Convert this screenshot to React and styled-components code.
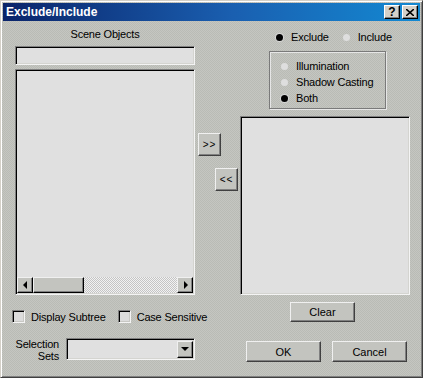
import React from 'react'
import styled, { createGlobalStyle } from 'styled-components'

const GlobalStyle = createGlobalStyle`
  * { box-sizing: border-box; }
  body {
    margin: 0;
    background: #c0c0c0;
    font-family: "Liberation Sans", Arial, sans-serif;
  }
`

const Window = styled.div`
  width: 423px;
  height: 378px;
  display: flex;
  flex-direction: column;
  padding: 1px;
  border: 1px solid;
  border-color: #d4d0c8 #404040 #404040 #d4d0c8;
  box-shadow: inset 1px 1px 0 #fff, inset -1px -1px 0 #808080;
  background-color: #bfc0bb;
  background-image: repeating-conic-gradient(#c5c6c1 0 25%, #b9bbb5 0 50%);
  background-size: 2px 2px;
  overflow: hidden;
`

const TitleBar = styled.div`
  height: 18px;
  margin: 1px 1px 0;
  display: flex;
  align-items: center;
  padding: 0 2px 0 3px;
  background: linear-gradient(to right, #0a246a 0%, #1a5fb0 55%, #1389d2 100%);
`

const Title = styled.div`
  flex: 1;
  color: #fff;
  font-weight: bold;
  font-size: 12px;
  line-height: 18px;
`

const TitleButton = styled.div`
  width: 16px;
  height: 14px;
  margin-left: 2px;
  display: flex;
  align-items: center;
  justify-content: center;
  background: #d4d0c8;
  border: 1px solid;
  border-color: #fff #000 #000 #fff;
  box-shadow: inset -1px -1px 0 #808080;
  font-weight: bold;
  font-size: 12px;
  color: #000;
`

const Body = styled.div`
  flex: 1;
  display: flex;
  align-items: flex-start;
  padding-left: 13px;
  font-size: 11px;
  letter-spacing: -0.2px;
  color: #000;
`

const LeftColumn = styled.div`
  width: 180px;
  flex-shrink: 0;
  display: flex;
  flex-direction: column;
`

const MiddleColumn = styled.div`
  width: 45px;
  flex-shrink: 0;
  display: flex;
  flex-direction: column;
`

const RightColumn = styled.div`
  width: 170px;
  flex-shrink: 0;
  display: flex;
  flex-direction: column;
`

const Label = styled.div`
  margin-top: 6px;
  height: 14px;
  line-height: 14px;
  text-align: center;
`

const Sunken = styled.div`
  margin-top: ${p => p.$top || 0}px;
  height: ${p => p.$height}px;
  background: #e0e0e0;
  border: 1px solid;
  border-color: #808080 #f4f4f4 #f4f4f4 #808080;
  box-shadow: inset 1px 1px 0 #000, inset -1px -1px 0 #d4d4d0;
  display: flex;
  flex-direction: column;
`

const ListArea = styled.div`
  flex: 1;
`

const ScrollBar = styled.div`
  height: 16px;
  margin: 0 1px 1px 1px;
  display: flex;
  background-image: repeating-conic-gradient(#f2f2f2 0 25%, #c4c4c4 0 50%);
  background-size: 2px 2px;
`

const ScrollButton = styled.div`
  width: ${p => p.$width || 16}px;
  height: 16px;
  flex-shrink: 0;
  display: flex;
  align-items: center;
  justify-content: center;
  background: #c3c4bf;
  border: 1px solid;
  border-color: #f0f0f0 #000 #000 #f0f0f0;
  box-shadow: inset -1px -1px 0 #808080;
`

const Track = styled.div`
  flex: 1;
`

const Arrow = ({ dir }) => {
  const points = {
    left: '5,1 5,9 1,5',
    right: '2,1 2,9 6,5',
    down: '0,2 8,2 4,6',
  }[dir]
  const size = dir === 'down' ? [8, 8] : [7, 10]
  return (
    <svg width={size[0]} height={size[1]} viewBox={`0 0 ${size[0]} ${size[1]}`}>
      <polygon points={points} fill="#000" />
    </svg>
  )
}

const CheckRow = styled.div`
  margin-top: 15px;
  margin-left: -3px;
  height: 13px;
  display: flex;
  align-items: center;
  white-space: nowrap;
`

const CheckBox = styled.span`
  flex-shrink: 0;
  width: 13px;
  height: 13px;
  margin-right: 6px;
  margin-left: ${p => p.$gap || 0}px;
  background: #dcdcdc;
  border: 1px solid;
  border-color: #808080 #f4f4f4 #f4f4f4 #808080;
  box-shadow: inset 1px 1px 0 #000, inset -1px -1px 0 #c8c8c4;
`

const SelectionRow = styled.div`
  margin-top: 15px;
  display: flex;
  align-items: center;
  height: 22px;
`

const SelectionLabel = styled.div`
  width: 46px;
  text-align: right;
  line-height: 12px;
  margin-right: 7px;
  margin-top: 1px;
`

const Combo = styled.div`
  width: 129px;
  height: 22px;
  flex-shrink: 0;
  background: #e0e0e0;
  border: 1px solid;
  border-color: #808080 #f4f4f4 #f4f4f4 #808080;
  box-shadow: inset 1px 1px 0 #000, inset -1px -1px 0 #d4d4d0;
  display: flex;
  justify-content: flex-end;
  align-items: center;
  padding-right: 1px;
`

const ComboButton = styled.div`
  width: 16px;
  height: 17px;
  display: flex;
  align-items: center;
  justify-content: center;
  background: #c3c4bf;
  border: 1px solid;
  border-color: #f0f0f0 #000 #000 #f0f0f0;
  box-shadow: inset -1px -1px 0 #808080;
`

const Button = styled.div`
  width: ${p => p.$width}px;
  height: ${p => p.$height}px;
  flex-shrink: 0;
  margin-left: ${p => p.$left || 0}px;
  margin-top: ${p => p.$top || 0}px;
  display: flex;
  align-items: center;
  justify-content: center;
  background: #c3c4bf;
  border: 1px solid;
  border-color: #f0f0f0 #404040 #404040 #f0f0f0;
  box-shadow: inset -1px -1px 0 #808080;
  font-size: ${p => p.$size || 11}px;
  letter-spacing: ${p => (p.$size ? '1px' : 'normal')};
`

const RadioRow = styled.div`
  margin-top: 9px;
  height: 14px;
  display: flex;
  align-items: center;
  padding-left: 36px;
`

const Radio = styled.span`
  flex-shrink: 0;
  width: 7px;
  height: 7px;
  border-radius: 50%;
  margin-right: 8px;
  margin-left: ${p => p.$gap || 0}px;
  background: ${p => (p.$on ? '#000' : '#dedede')};
  box-shadow: ${p => (p.$on ? '0 0 0 1px #d6d6d6' : 'none')};
`

const Group = styled.div`
  margin-top: 7px;
  margin-left: 29px;
  width: 117px;
  height: 58px;
  border: 1px solid #7a7a7a;
  box-shadow: inset 1px 1px 0 #e6e6e6, 1px 1px 0 #e6e6e6;
  padding: 6px 0 0 11px;
  display: flex;
  flex-direction: column;
`

const GroupItem = styled.div`
  height: 16px;
  display: flex;
  align-items: center;
`

const ButtonRow = styled.div`
  margin-top: 19px;
  display: flex;
`

export default function App() {
  return (
    <>
      <GlobalStyle />
      <Window>
        <TitleBar>
          <Title>Exclude/Include</Title>
          <TitleButton>?</TitleButton>
          <TitleButton>
            <svg width="8" height="7" viewBox="0 0 8 7">
              <path d="M0 0 L8 7 M8 0 L0 7" stroke="#000" strokeWidth="1.6" />
            </svg>
          </TitleButton>
        </TitleBar>
        <Body>
          <LeftColumn>
            <Label>Scene Objects</Label>
            <Sunken $top={5} $height={19} />
            <Sunken $top={4} $height={226}>
              <ListArea />
              <ScrollBar>
                <ScrollButton><Arrow dir="left" /></ScrollButton>
                <ScrollButton $width={51} />
                <Track />
                <ScrollButton><Arrow dir="right" /></ScrollButton>
              </ScrollBar>
            </Sunken>
            <CheckRow>
              <CheckBox />
              Display Subtree
              <CheckBox $gap={12} />
              Case Sensitive
            </CheckRow>
            <SelectionRow>
              <SelectionLabel>Selection<br />Sets</SelectionLabel>
              <Combo>
                <ComboButton><Arrow dir="down" /></ComboButton>
              </Combo>
            </SelectionRow>
          </LeftColumn>
          <MiddleColumn>
            <Button $width={23} $height={23} $left={3} $top={112} $size={10}>&gt;&gt;</Button>
            <Button $width={23} $height={23} $left={20} $top={12} $size={10}>&lt;&lt;</Button>
          </MiddleColumn>
          <RightColumn>
            <RadioRow>
              <Radio $on />
              Exclude
              <Radio $gap={14} />
              Include
            </RadioRow>
            <Group>
              <GroupItem><Radio />Illumination</GroupItem>
              <GroupItem><Radio />Shadow Casting</GroupItem>
              <GroupItem><Radio $on />Both</GroupItem>
            </Group>
            <Sunken $top={7} $height={179} />
            <Button $width={65} $height={20} $left={50} $top={7}>Clear</Button>
            <ButtonRow>
              <Button $width={75} $height={21} $left={6}>OK</Button>
              <Button $width={75} $height={21} $left={11}>Cancel</Button>
            </ButtonRow>
          </RightColumn>
        </Body>
      </Window>
    </>
  )
}
